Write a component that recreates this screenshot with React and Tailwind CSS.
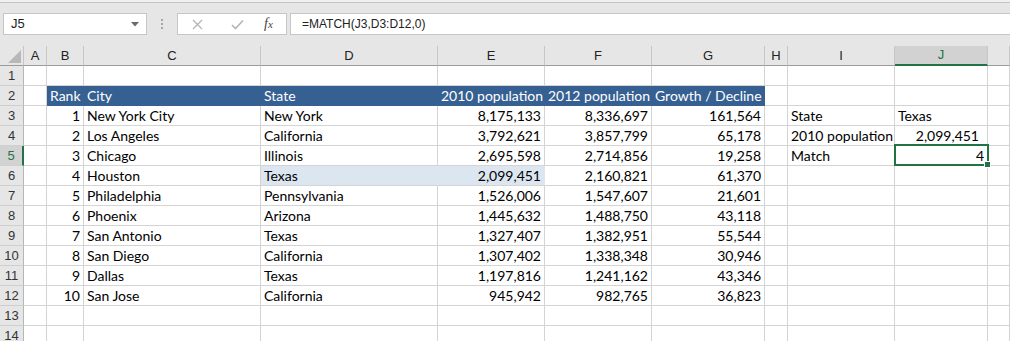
import React from "react";

const COLS =
  "grid grid-cols-[24px_23px_37px_177px_177px_107px_107px_113px_23px_107px_93px_22px]";

const data = [
  [1, "New York City", "New York", "8,175,133", "8,336,697", "161,564"],
  [2, "Los Angeles", "California", "3,792,621", "3,857,799", "65,178"],
  [3, "Chicago", "Illinois", "2,695,598", "2,714,856", "19,258"],
  [4, "Houston", "Texas", "2,099,451", "2,160,821", "61,370"],
  [5, "Philadelphia", "Pennsylvania", "1,526,006", "1,547,607", "21,601"],
  [6, "Phoenix", "Arizona", "1,445,632", "1,488,750", "43,118"],
  [7, "San Antonio", "Texas", "1,327,407", "1,382,951", "55,544"],
  [8, "San Diego", "California", "1,307,402", "1,338,348", "30,946"],
  [9, "Dallas", "Texas", "1,197,816", "1,241,162", "43,346"],
  [10, "San Jose", "California", "945,942", "982,765", "36,823"],
];

const side = {
  3: ["State", "Texas"],
  4: ["2010 population", "2,099,451"],
  5: ["Match", "4"],
};

function Cell({ children, align = "left", fill, className = "" }) {
  const base =
    "h-5 flex items-center overflow-visible whitespace-nowrap border-b border-r text-[14px] leading-none";
  const al = align === "right" ? "justify-end pr-[3px]" : "justify-start pl-[3px]";
  let color = "border-[#d4d4d4] text-black";
  if (fill === "blue") color = "bg-[#366092] border-[#366092] text-white";
  if (fill === "sel") color = "bg-[#dce6f1] border-b-[#d4d4d4] border-r-[#dce6f1] text-black";
  return <div className={`${base} ${al} ${color} ${className}`}>{children}</div>;
}

function RowHeader({ n, selected }) {
  return (
    <div
      className={`h-5 flex items-center justify-center border-b border-[#cfcfcf] text-[13px] font-['Liberation_Sans',sans-serif] ${
        selected
          ? "bg-[#d2d2d2] text-[#217346] border-r-2 border-r-[#217346]"
          : "bg-[#e6e6e6] text-[#333] border-r border-r-[#b6b6b6]"
      }`}
    >
      {n}
    </div>
  );
}

export default function App() {
  const letters = ["A", "B", "C", "D", "E", "F", "G", "H", "I", "J", ""];
  const rows = [];
  for (let r = 1; r <= 14; r++) {
    const cells = [];
    cells.push(<RowHeader key="h" n={r} selected={r === 5} />);
    // A
    cells.push(<Cell key="A" />);
    if (r === 2) {
      cells.push(<Cell key="B" fill="blue">Rank</Cell>);
      cells.push(<Cell key="C" fill="blue">City</Cell>);
      cells.push(<Cell key="D" fill="blue">State</Cell>);
      cells.push(<Cell key="E" fill="blue">2010 population</Cell>);
      cells.push(<Cell key="F" fill="blue">2012 population</Cell>);
      cells.push(<Cell key="G" fill="blue">Growth / Decline</Cell>);
    } else if (r >= 3 && r <= 12) {
      const d = data[r - 3];
      const hl = r === 6 ? "sel" : undefined;
      cells.push(<Cell key="B" align="right">{d[0]}</Cell>);
      cells.push(<Cell key="C">{d[1]}</Cell>);
      cells.push(<Cell key="D" fill={hl}>{d[2]}</Cell>);
      cells.push(<Cell key="E" align="right" fill={hl}>{d[3]}</Cell>);
      cells.push(<Cell key="F" align="right">{d[4]}</Cell>);
      cells.push(<Cell key="G" align="right">{d[5]}</Cell>);
    } else {
      ["B", "C", "D", "E", "F", "G"].forEach((k) => cells.push(<Cell key={k} />));
    }
    cells.push(<Cell key="H" />);
    const s = side[r];
    cells.push(<Cell key="I">{s ? s[0] : ""}</Cell>);
    if (r === 5) {
      cells.push(
        <div key="J" className="relative h-5 flex items-center justify-end pr-[3px] border-b border-r border-[#d4d4d4] text-[14px] leading-none">
          4
          <div className="absolute -left-px -top-[2px] -right-[2px] -bottom-px border-2 border-[#217346] z-10" />
          <div className="absolute -right-[4px] -bottom-[3px] w-[7px] h-[7px] bg-[#217346] border border-white z-20" />
        </div>
      );
    } else if (r === 4) {
      cells.push(<Cell key="J" align="right" className="pr-[8px]">{s[1]}</Cell>);
    } else {
      cells.push(<Cell key="J">{s ? s[1] : ""}</Cell>);
    }
    cells.push(<Cell key="K" />);
    rows.push(
      <div key={r} className={COLS}>
        {cells}
      </div>
    );
  }

  return (
    <div className="w-[1010px] h-[341px] overflow-hidden bg-white font-['Lato',sans-serif]">
      {/* Formula bar area */}
      <div className="h-[46px] bg-[#e6e6e6] flex flex-col">
        <div className="h-[2px] bg-[#f0f0f0]" />
        <div className="h-px bg-[#c6c6c6]" />
        <div className="flex items-start pt-[10px] font-['Liberation_Sans',sans-serif]">
          <div className="ml-[3px] w-[144px] h-[22px] bg-white border border-[#c6c6c6] flex items-center justify-between pl-[7px] pr-[7px] text-[13px] text-[#222]">
            <span>J5</span>
            <svg width="8" height="5" viewBox="0 0 8 5">
              <path d="M0 0 H8 L4 4.5 Z" fill="#6a6a6a" />
            </svg>
          </div>
          <div className="w-[30px] h-[22px] flex flex-col items-center justify-center gap-[2px]">
            <div className="w-[2px] h-[2px] bg-[#a6a6a6]" />
            <div className="w-[2px] h-[2px] bg-[#a6a6a6]" />
            <div className="w-[2px] h-[2px] bg-[#a6a6a6]" />
          </div>
          <div className="w-[110px] h-[22px] bg-white border border-[#c6c6c6] flex items-center">
            <svg className="ml-[14px]" width="11" height="11" viewBox="0 0 11 11">
              <path d="M1 1 L10 10 M10 1 L1 10" stroke="#b4b4b4" strokeWidth="1.3" fill="none" />
            </svg>
            <svg className="ml-[28px]" width="13" height="11" viewBox="0 0 13 11">
              <path d="M1 6 L4.5 9.5 L12 1.5" stroke="#b4b4b4" strokeWidth="1.6" fill="none" />
            </svg>
            <span className="ml-[20px] italic font-['Liberation_Serif',serif] text-[14px] text-[#444] leading-none">
              f<span className="text-[11px]">x</span>
            </span>
          </div>
          <div className="ml-[3px] flex-1 h-[22px] bg-white border border-[#c6c6c6] border-r-0 flex items-center pl-[11px] text-[12px] text-[#222]">
            =MATCH(J3,D3:D12,0)
          </div>
        </div>
      </div>

      {/* Column headers */}
      <div className={`${COLS} bg-[#e6e6e6]`}>
        <div className="h-5 border-b border-[#9b9b9b] border-r border-r-[#c6c6c6] relative">
          <svg className="absolute left-[8px] top-[4px]" width="13" height="13" viewBox="0 0 13 13">
            <path d="M13 0 V13 H0 Z" fill="#b8b8b8" />
          </svg>
        </div>
        {letters.map((l) => (
          <div
            key={l || "K"}
            className={`h-5 flex items-center justify-center text-[13px] font-['Liberation_Sans',sans-serif] border-r border-r-[#c6c6c6] ${
              l === "J"
                ? "bg-[#d2d2d2] text-[#217346] border-b-2 border-b-[#217346]"
                : "text-[#222] border-b border-b-[#9b9b9b]"
            }`}
          >
            {l}
          </div>
        ))}
      </div>

      {rows}
    </div>
  );
}
